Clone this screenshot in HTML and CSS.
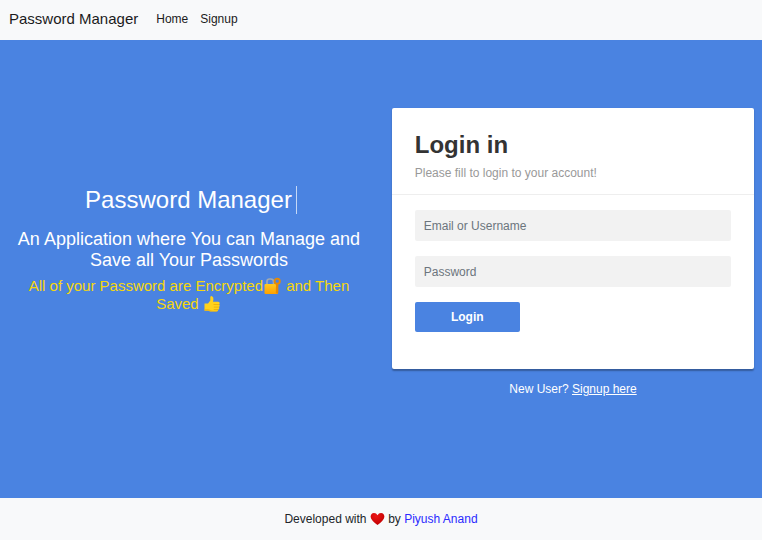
FILE: index.html
```html
<!DOCTYPE html>
<html lang="en">
<head>
<meta charset="utf-8">
<title>Password Manager</title>
<link rel="stylesheet" href="styles.css">
</head>
<body>
<nav class="navbar">
  <a class="brand" href="#">Password Manager</a>
  <a class="nav-link" href="#">Home</a>
  <a class="nav-link" href="#">Signup</a>
</nav>
<main class="main">
  <section class="intro">
    <h1 class="title">Password Manager<span class="cursor"></span></h1>
    <h4 class="lead">An Application where You can Manage and Save all Your Passwords</h4>
    <h5 class="note">All of your Password are Encrypted<svg class="emoji" viewBox="0 0 19 18" aria-hidden="true">
      <defs><linearGradient id="gold" x2="0" y2="1"><stop stop-color="#ffca1f"/><stop offset="1" stop-color="#ffa000"/></linearGradient></defs>
      <path d="M4 8V4.500Q4 2 6.500 2h1.200Q10.500 2 10.500 4.500V8" fill="none" stroke="#a3a9ae" stroke-width="1.700"/>
      <rect x="1.500" y="7" width="13.500" height="10" rx="1" fill="url(#gold)"/>
      <path d="M13 6h2.300v9.500l-1.200 1.500-1.300-1.300z" fill="#e98a00"/>
      <circle cx="14.200" cy="4.200" r="2.600" fill="none" stroke="#e98a00" stroke-width="1.900"/>
    </svg> and Then Saved <svg class="emoji" viewBox="0 0 19 18" aria-hidden="true">
      <path d="M1.500 8.500h3.500L7.300 5.500V2.500Q7.500 .8 9 1.200 10.800 2 10.400 4.500L10 6.700h5.200q1.500 0 1.500 1.500 0 .9-.7 1.200.8.400.7 1.400 0 .9-.9 1.200.6.500.4 1.400-.2.800-1 1.100.3 2-1.500 2H7.500L5 15.800H1.500z" fill="#ffd21c"/>
      <path d="M10.500 9.500h5.400M10.800 12.100h4.900M10.700 14.500h4.300" stroke="#e9ab08" stroke-width=".8" fill="none"/>
      <path d="M1.500 14v1.800H5l2.500.7h6.200q1.400-.2 1.400-1.200-3 .7-6.300.1L5 14z" fill="#f0ae09" opacity=".65"/>
    </svg></h5>
  </section>
  <section class="login">
    <form class="card">
      <header class="card-head">
        <h2 class="card-title">Login in</h2>
        <p class="hint">Please fill to login to your account!</p>
      </header>
      <div class="fields">
        <input class="field" type="text" placeholder="Email or Username">
        <input class="field" type="password" placeholder="Password">
        <button class="submit" type="button">Login</button>
      </div>
    </form>
    <p class="signup">New User? <a href="#">Signup here</a></p>
  </section>
</main>
<footer class="footer">
  <p>Developed with <svg class="heart" viewBox="0 0 15 14" aria-hidden="true">
    <defs><radialGradient id="red" cx=".4" cy=".25" r=".8"><stop stop-color="#ed1515"/><stop offset="1" stop-color="#bd0000"/></radialGradient></defs>
    <path d="M7.500 13Q1 8.500.6 4.800.8 1 4 1q2.300 0 3.500 2.200Q8.700 1 11 1q3.200 0 3.400 3.800Q14 8.500 7.500 13z" fill="url(#red)"/>
  </svg> by <a href="#">Piyush Anand</a></p>
</footer>
</body>
</html>
```

FILE: styles.css
```css
* {
  box-sizing: border-box;
}

body {
  margin: 0;
  height: 540px;
  display: flex;
  flex-direction: column;
  font-family: "Liberation Sans", Arial, sans-serif;
  font-size: 12px;
  line-height: 18px;
  color: #212529;
  background: #4a83e1;
}

h1, h2, h4, h5, p {
  margin: 0;
  font-weight: 400;
}

.navbar {
  height: 40px;
  padding: 0 9px 2px;
  display: flex;
  align-items: center;
  background: #f8f9fa;
}

.brand,
.nav-link {
  color: #1b1b1c;
  text-decoration: none;
}

.brand {
  font-size: 15px;
  margin-right: 18px;
}

.nav-link {
  margin-right: 12px;
}

.main {
  flex: 1;
  display: grid;
  grid-template-columns: 378px 1fr;
}

.intro {
  padding: 143.5px 9px 0;
  text-align: center;
  color: #fff;
}

.title {
  display: flex;
  justify-content: center;
  align-items: center;
  height: 32px;
  padding-left: 4px;
  font-size: 24px;
  line-height: 29px;
}

.cursor {
  width: 1px;
  height: 28px;
  margin-left: 4px;
  background: #c5d8f6;
}

.lead {
  margin-top: 13px;
  font-size: 18px;
  line-height: 21px;
}

.note {
  margin-top: 6px;
  font-size: 15px;
  line-height: 18px;
  color: #f6d70b;
}

.emoji {
  width: 19px;
  height: 18px;
  margin: -3px 0;
  vertical-align: -1px;
}

.login {
  padding: 67.5px 8.25px 0 14.25px;
}

.card {
  height: 261.75px;
  background: #fff;
  border-radius: 2px;
  box-shadow: 0 1.5px 1.5px rgba(0, 0, 0, 0.3);
}

.card-head {
  height: 87px;
  padding: 22.5px 22.5px 0;
  border-bottom: 1px solid #eee;
}

.card-title {
  font-size: 24px;
  line-height: 29px;
  font-weight: 700;
  color: #333;
}

.hint {
  margin-top: 5px;
  color: #999;
}

.fields {
  padding: 15.5px 22.5px 0;
}

.field {
  display: block;
  width: 100%;
  height: 31px;
  margin-bottom: 15px;
  padding: 0 9px;
  border: 0;
  border-radius: 2px;
  background: #f2f2f2;
  font: inherit;
}

.field::placeholder {
  color: #6c757d;
  opacity: 1;
}

.submit {
  display: block;
  width: 105px;
  height: 30px;
  padding: 0;
  border: 0;
  border-radius: 2px;
  background: #4a83e1;
  color: #fff;
  font: inherit;
  font-weight: 700;
}

.signup {
  margin-top: 10.75px;
  text-align: center;
  color: #fff;
}

.signup a {
  color: inherit;
}

.footer {
  height: 42px;
  padding-top: 12px;
  text-align: center;
  background: #f8f9fa;
}

.footer a {
  color: #2b2bff;
  text-decoration: none;
}

.heart {
  width: 15px;
  height: 14px;
  vertical-align: -3px;
}
```
